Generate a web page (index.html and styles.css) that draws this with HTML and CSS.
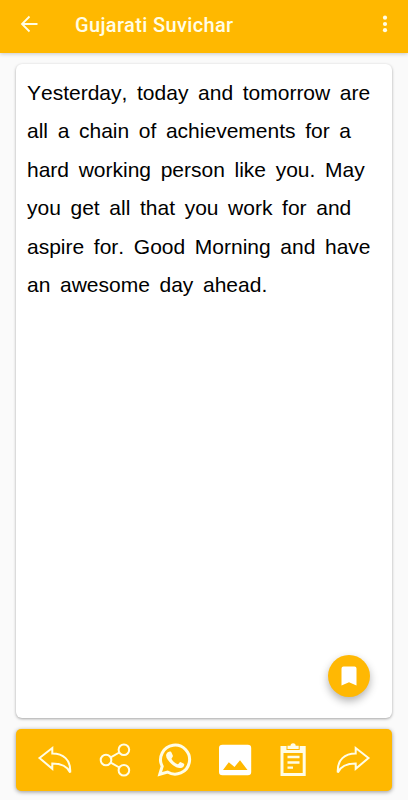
FILE: index.html
```html
<!DOCTYPE html>
<html lang="en">
<head>
<meta charset="UTF-8">
<meta name="viewport" content="width=device-width, initial-scale=1.0">
<title>Gujarati Suvichar</title>
<link rel="stylesheet" href="styles.css">
</head>
<body>

<header class="topbar">
    <button class="icon-btn" aria-label="Back">
        <svg width="18" height="18" viewBox="0 0 18 18"><path d="M17.500 9H2.500M9.500 1.500L2 9L9.500 16.500" fill="none" stroke="currentColor" stroke-width="1.8"/></svg>
    </button>
    <h1>Gujarati Suvichar</h1>
    <button class="icon-btn" aria-label="More">
        <svg width="6" height="18" viewBox="0 0 6 18" fill="currentColor"><circle cx="3" cy="2.7" r="2.1"/><circle cx="3" cy="9" r="2.1"/><circle cx="3" cy="15.2" r="2.1"/></svg>
    </button>
</header>

<main class="card">
    <p class="quote">Yesterday, today and tomorrow are<br>
    all a chain of achievements for a<br>
    hard working person like you. May<br>
    you get all that you work for and<br>
    aspire for. Good Morning and have<br>
    an awesome day ahead.</p>
    <button class="fab" aria-label="Bookmark">
        <svg width="16" height="20" viewBox="0 0 16 20"><path d="M2.5 .5h11Q15.500 .5 15.500 2.500V19.500L8 16.200L.5 19.500V2.500Q.5 .5 2.500 .5z" fill="#fff"/></svg>
    </button>
</main>

<nav class="toolbar">
    <!-- previous -->
    <button class="tool" aria-label="Previous">
        <svg viewBox="-20 -20 40 40"><path class="line" d="M-15.500 -2L-2.700 -12V-6.500C8 -6.500 16 -.5 15.200 12.500C12 5.500 6 3.500 -2.700 3.500V8.800z"/></svg>
    </button>
    <!-- share -->
    <button class="tool" aria-label="Share">
        <svg viewBox="-20 -20 40 40"><g class="line"><circle cx="-9" cy="0" r="5.300"/><circle cx="8.900" cy="-10.200" r="5.300"/><circle cx="8.900" cy="10.200" r="5.300"/><path d="M-4.300 -2.600L4.300 -7.500M-4.300 2.600L4.300 7.500"/></g></svg>
    </button>
    <!-- whatsapp -->
    <button class="tool" aria-label="WhatsApp">
        <svg viewBox="-20 -20 40 40"><path d="M-14.200 14.200L-11.800 6.300A14.500 14.500 0 1 1 -6.500 12z" fill="none" stroke="currentColor" stroke-width="3"/><path d="M-4.800 -8.300C-3.500 -8.600 -2.800 -8.300 -2.400 -7.200L-1.100 -4.200C-.8 -3 -2.800 -1.700 -2.400 -1C-.8 1.700 1 3.200 3.600 4.300C4.500 4.500 5.400 2 6.500 2L10 3.700C10.700 4.300 9.800 6.600 8.400 7.400C5.300 9 1.800 7.200 -1 5.200C-4.500 2.500 -8.700 -2.200 -7.800 -5.500C-7.300 -7.100 -6 -8.200 -4.800 -8.300z"/></svg>
    </button>
    <!-- image -->
    <button class="tool" aria-label="Image">
        <svg viewBox="-20 -20 40 40"><path fill-rule="evenodd" d="M-11.500 -15.300H13.800Q17.200 -15.300 17.200 -12V12Q17.200 15.300 13.800 15.300H-11.500Q-15 15.300 -15 12V-12Q-15 -15.300 -11.500 -15.300zM-11 10H13.500L6 .2L.5 7L-5.200 2.300z" fill="#fff"/></svg>
    </button>
    <!-- copy -->
    <button class="tool" aria-label="Copy">
        <svg viewBox="-20 -20 40 40"><path fill-rule="evenodd" d="M-13.500 -14H-7.500V-10H5.700V-14H11.700V16H-13.500zM-10.500 -7V13H8.700V-7z"/><path d="M-6.500 -14.200H-3.500Q-3.500 -16.700 -.9 -16.700Q1.700 -16.700 1.700 -14.200H4.700V-11H-6.500z"/><path d="M-6.500 -3H5.500M-6.500 2.500H5.500M-6.500 7.700H-1" stroke="currentColor" stroke-width="2.300"/></svg>
    </button>
    <!-- next -->
    <button class="tool" aria-label="Next">
        <svg viewBox="-20 -20 40 40"><path class="line" d="M15.500 -2L2.700 -12V-6.500C-8 -6.500 -16 -.5 -15.200 12.500C-12 5.500 -6 3.500 2.700 3.500V8.800z"/></svg>
    </button>
</nav>

</body>
</html>
```
FILE: styles.css
```css
* { box-sizing:border-box; }
body { margin:0; height:800px; display:flex; flex-direction:column; background:#fafafa; font-family:"Liberation Sans",Arial,sans-serif; overflow:hidden; }
button { border:none; background:none; padding:0; color:inherit; cursor:pointer; }
svg { display:block; }

.topbar { height:53px; flex:none; display:flex; align-items:center; padding:0 20px 5px; background:#ffb800; color:#fffde6; box-shadow:0 1px 4px rgba(0,0,0,.2); }
.topbar h1 { flex:1; margin:0 0 0 37px; padding-top:2px; font:500 20px/24px Roboto,sans-serif; letter-spacing:.36px; }

.card { flex:1; margin:11px 16px; padding:9px 11px; background:#fff; border-radius:6px; box-shadow:0 1px 3px rgba(0,0,0,.35); display:flex; flex-direction:column; justify-content:space-between; }
.quote { margin:0; padding-top:.5px; font-size:21px; font-kerning:none; line-height:38.6px; word-spacing:3.8px; color:#000; white-space:nowrap; }
.fab { width:42px; height:42px; margin:0 11px 12.5px 0; align-self:flex-end; display:flex; align-items:center; justify-content:center; border-radius:50%; background:#ffb803; box-shadow:0 4px 8px rgba(0,0,0,.3); }

.toolbar { height:62px; flex:none; margin:0 16px 9px; padding:0 9px; display:flex; align-items:center; background:#ffb800; color:#fffde6; border-radius:5px; box-shadow:0 1px 4px rgba(0,0,0,.4); }
.tool { flex:1; display:flex; justify-content:center; }
.tool svg { width:40px; height:40px; fill:currentColor; }
.tool .line { fill:none; stroke:currentColor; stroke-width:2; }
```
